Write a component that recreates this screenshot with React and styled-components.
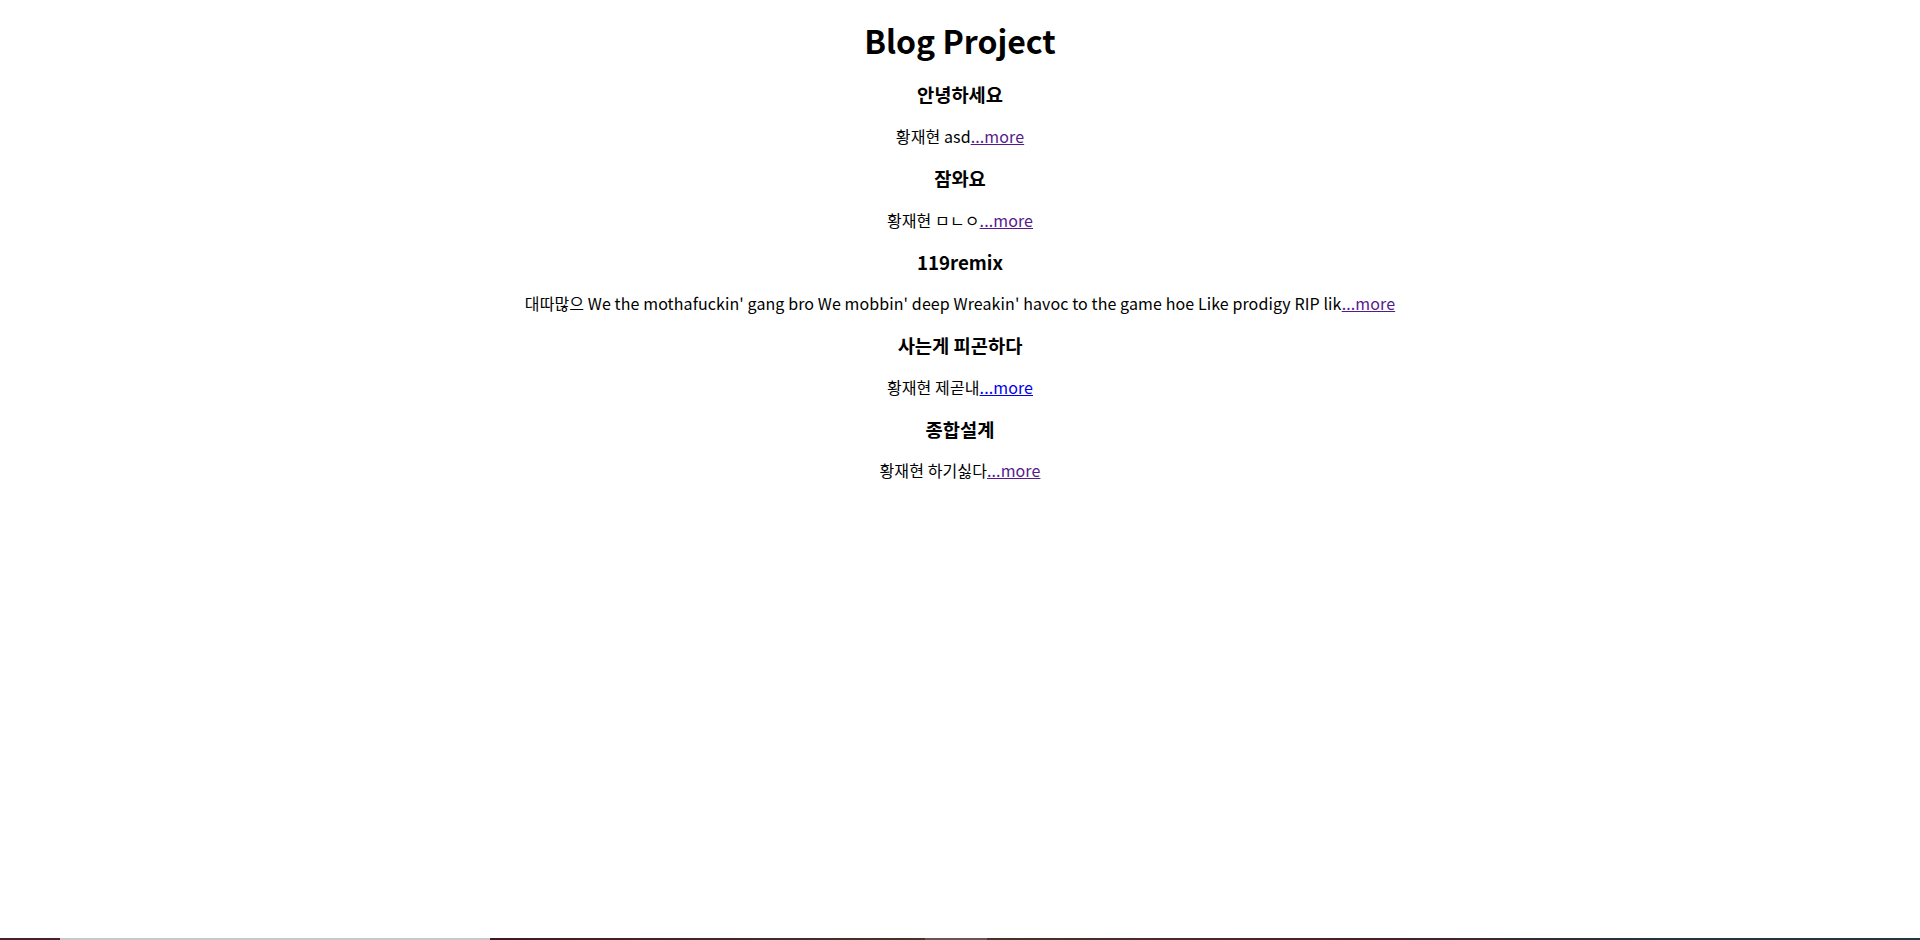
import React from 'react';
import styled, { createGlobalStyle } from 'styled-components';

const posts = [
  { title: '안녕하세요', body: '황재현 asd', visited: true },
  { title: '잠와요', body: '황재현 ㅁㄴㅇ', visited: true },
  {
    title: '119remix',
    body: "대따많으 We the mothafuckin' gang bro We mobbin' deep Wreakin' havoc to the game hoe Like prodigy RIP lik",
    visited: true,
  },
  { title: '사는게 피곤하다', body: '황재현 제곧내', visited: false },
  { title: '종합설계', body: '황재현 하기싫다', visited: true },
];

const GlobalStyle = createGlobalStyle`
  body {
    margin: 0 8px;
    background: #fff;
    color: #000;
    font-family: "Noto Sans CJK KR", "Noto Sans", sans-serif;
  }
`;

const Page = styled.div`
  text-align: center;
`;

const Title = styled.h1`
  font-size: 32px;
  line-height: 1.33;
  margin: 18.5px 0 21.44px;
`;

const PostTitle = styled.h3`
  font-size: 18.72px;
  line-height: 1.33;
  margin: 18.72px 0;
`;

const PostBody = styled.p`
  font-size: 16px;
  line-height: 1.33;
  margin: 16px 0;
  letter-spacing: 0.1px;
`;

const More = styled.a`
  color: ${p => (p.$visited ? '#551a8b' : '#0000ee')};
  text-decoration: underline;
`;

const Taskbar = styled.div`
  position: fixed;
  left: 0;
  right: 0;
  bottom: 0;
  height: 2px;
  display: flex;
`;

const Seg = styled.div`
  width: ${p => p.$w}px;
  flex: ${p => (p.$grow ? 1 : 'none')};
  background: ${p => p.$bg};
`;

export default function App() {
  return (
    <Page>
      <GlobalStyle />
      <Title>Blog Project</Title>
      {posts.map(post => (
        <div key={post.title}>
          <PostTitle>{post.title}</PostTitle>
          <PostBody>
            {post.body}
            <More href="#" $visited={post.visited}>...more</More>
          </PostBody>
        </div>
      ))}
      <Taskbar>
        <Seg $w={60} $bg="#4a1f2e" />
        <Seg $w={430} $bg="#c8c8c8" />
        <Seg $w={435} $bg="linear-gradient(90deg, #3e1a24, #4a3328)" />
        <Seg $w={62} $bg="#6a5550" />
        <Seg $grow $bg="linear-gradient(90deg, #4a3328, #4a2028 40%, #24363c 70%, #1f3a40)" />
      </Taskbar>
    </Page>
  );
}
